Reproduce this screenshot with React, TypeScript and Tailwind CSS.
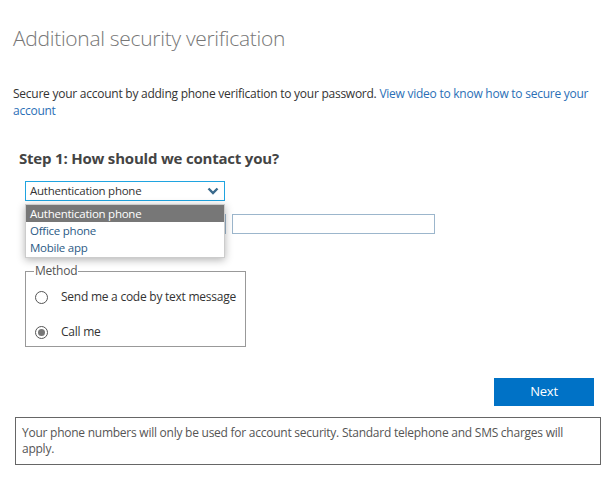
const font = { fontFamily: '"Segoe UI", "Open Sans", "Noto Sans", sans-serif' };

function Chevron() {
  return (
    <svg className="h-[10px] w-[12px] text-[#3a6a8c]" viewBox="0 0 12 10" fill="none" stroke="currentColor" strokeWidth="2.4">
      <path d="M1.5 2.5 6 7l4.5-4.5" />
    </svg>
  );
}

function Radio({ checked }: { checked?: boolean }) {
  return (
    <span className="flex h-[13px] w-[13px] shrink-0 items-center justify-center rounded-full border border-[#555] bg-white">
      {checked && <span className="h-[7px] w-[7px] rounded-full bg-[#777]" />}
    </span>
  );
}

export default function App() {
  return (
    <div className="h-[496px] w-[616px] bg-white text-[12px] tracking-[-0.25px] text-[#333]" style={font}>
      <div className="px-[13px] pt-[22px]">
        <h1 className="text-[21px] font-light leading-[32px] tracking-[-0.3px] text-[#777]">
          Additional security verification
        </h1>
        <p className="mt-[31px] leading-[17px]">
          Secure your account by adding phone verification to your password.{' '}
          <a className="text-[#2b6fb6]">View video to know how to secure your</a>
          <br />
          <a className="text-[#2b6fb6]">account</a>
        </p>
      </div>

      <div className="pl-[19px] pt-[29px]">
        <h2 className="text-[15px] font-bold leading-[20px] tracking-[-0.2px] text-[#444]">
          Step 1: How should we contact you?
        </h2>
      </div>

      <div className="relative pl-[25px] pt-[13px]">
        <div className="flex h-[20px] w-[200px] items-center justify-between border border-[#20a4e0] pl-[4px] pr-[5px] text-[11.5px]">
          <span>Authentication phone</span>
          <Chevron />
        </div>

        <div className="mt-[13px] flex gap-[6px]">
          <div className="h-[20px] w-[201px] border border-[#9cb6cc]" />
          <div className="h-[20px] w-[203px] border border-[#9cb6cc]" />
        </div>

        <ul className="absolute left-[25px] top-[36px] z-10 w-[200px] border border-[#ccc] bg-white pb-[1px] text-[11.5px] leading-[17px] shadow-[0_2px_8px_rgba(0,0,0,0.3)]">
          <li className="bg-[#777] pl-[4px] text-white">Authentication phone</li>
          <li className="pl-[4px] text-[#2b5a85]">Office phone</li>
          <li className="pl-[4px] text-[#2b5a85]">Mobile app</li>
        </ul>

        <fieldset className="mt-[30px] w-[221px] border border-[#999] px-[8px]">
          <legend className="px-[1px] text-[12px] leading-[14px] text-[#555]">Method</legend>
          <label className="flex items-center gap-[13px] py-[10px] pl-[1px]">
            <Radio />
            <span className="whitespace-nowrap">Send me a code by text message</span>
          </label>
          <label className="flex items-center gap-[13px] pb-[5px] pt-[7px] pl-[1px]">
            <Radio checked />
            <span>Call me</span>
          </label>
        </fieldset>
      </div>

      <div className="flex justify-end pr-[22px] pt-[31px]">
        <button className="h-[28px] w-[100px] bg-[#0072c6] text-[13px] text-white">Next</button>
      </div>

      <div className="px-[15px] pt-[11px]">
        <div className="border border-[#666] px-[6px] py-[7px] leading-[16px] text-[#555]">
          Your phone numbers will only be used for account security. Standard telephone and SMS charges will apply.
        </div>
      </div>
    </div>
  );
}
